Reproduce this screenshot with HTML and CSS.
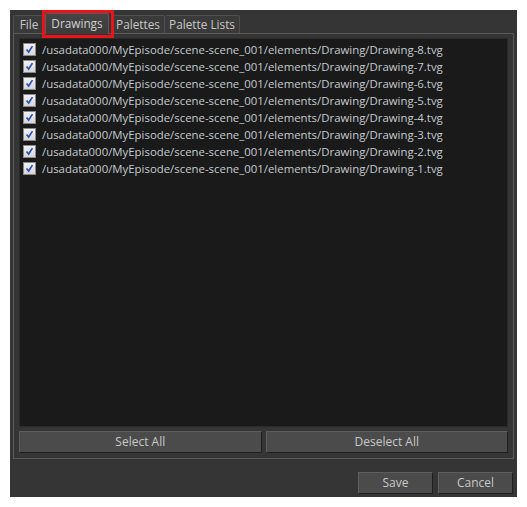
FILE: index.html
```html
<!DOCTYPE html>
<html>
<head>
<meta charset="utf-8">
<link rel="stylesheet" href="styles.css">
</head>
<body>
<div class="dialog">
  <div class="tabbar">
    <div class="tab tab-file">File</div>
    <div class="tab tab-active">Drawings<span class="highlight"></span></div>
    <div class="tab tab-pal">Palettes</div>
    <div class="tab tab-lists">Palette Lists</div>
  </div>
  <div class="frame">
    <div class="list">
      <div class="row"><span class="check"><svg viewBox="0 0 13 13" width="13" height="13"><path d="M3 6.5 L5.5 9.5 L10 2.5" fill="none" stroke="#2a52be" stroke-width="2"/></svg></span><span class="path">/usadata000/MyEpisode/scene-scene_001/elements/Drawing/Drawing-8.tvg</span></div>
      <div class="row"><span class="check"><svg viewBox="0 0 13 13" width="13" height="13"><path d="M3 6.5 L5.5 9.5 L10 2.5" fill="none" stroke="#2a52be" stroke-width="2"/></svg></span><span class="path">/usadata000/MyEpisode/scene-scene_001/elements/Drawing/Drawing-7.tvg</span></div>
      <div class="row"><span class="check"><svg viewBox="0 0 13 13" width="13" height="13"><path d="M3 6.5 L5.5 9.5 L10 2.5" fill="none" stroke="#2a52be" stroke-width="2"/></svg></span><span class="path">/usadata000/MyEpisode/scene-scene_001/elements/Drawing/Drawing-6.tvg</span></div>
      <div class="row"><span class="check"><svg viewBox="0 0 13 13" width="13" height="13"><path d="M3 6.5 L5.5 9.5 L10 2.5" fill="none" stroke="#2a52be" stroke-width="2"/></svg></span><span class="path">/usadata000/MyEpisode/scene-scene_001/elements/Drawing/Drawing-5.tvg</span></div>
      <div class="row"><span class="check"><svg viewBox="0 0 13 13" width="13" height="13"><path d="M3 6.5 L5.5 9.5 L10 2.5" fill="none" stroke="#2a52be" stroke-width="2"/></svg></span><span class="path">/usadata000/MyEpisode/scene-scene_001/elements/Drawing/Drawing-4.tvg</span></div>
      <div class="row"><span class="check"><svg viewBox="0 0 13 13" width="13" height="13"><path d="M3 6.5 L5.5 9.5 L10 2.5" fill="none" stroke="#2a52be" stroke-width="2"/></svg></span><span class="path">/usadata000/MyEpisode/scene-scene_001/elements/Drawing/Drawing-3.tvg</span></div>
      <div class="row"><span class="check"><svg viewBox="0 0 13 13" width="13" height="13"><path d="M3 6.5 L5.5 9.5 L10 2.5" fill="none" stroke="#2a52be" stroke-width="2"/></svg></span><span class="path">/usadata000/MyEpisode/scene-scene_001/elements/Drawing/Drawing-2.tvg</span></div>
      <div class="row"><span class="check"><svg viewBox="0 0 13 13" width="13" height="13"><path d="M3 6.5 L5.5 9.5 L10 2.5" fill="none" stroke="#2a52be" stroke-width="2"/></svg></span><span class="path">/usadata000/MyEpisode/scene-scene_001/elements/Drawing/Drawing-1.tvg</span></div>
    </div>
    <div class="selbtns">
      <div class="btn">Select All</div>
      <div class="btn">Deselect All</div>
    </div>
  </div>
  <div class="footer">
    <div class="btn btn-small">Save</div>
    <div class="btn btn-small">Cancel</div>
  </div>
</div>
</body>
</html>
```
FILE: styles.css
```css
html, body {
  margin: 0;
  padding: 0;
  background: #ffffff;
}
body {
  font-family: "Open Sans", "DejaVu Sans", sans-serif;
  font-size: 12px;
  color: #c8c8c8;
}
.dialog {
  margin: 10px 0 0 10px;
  width: 507px;
  height: 487px;
  background: #353535;
  box-sizing: border-box;
  padding: 3px 3px 3px 3px;
  display: flex;
  flex-direction: column;
}
.tabbar {
  display: flex;
  align-items: flex-end;
  height: 20px;
  position: relative;
  z-index: 1;
}
.tab {
  box-sizing: border-box;
  height: 18px;
  border: 1px solid #4f4f4f;
  border-bottom: none;
  background: #3a3a3a;
  text-align: center;
  line-height: 17px;
  font-size: 11.8px;
  border-radius: 2px 2px 0 0;
}
.tab-file { width: 32px; }
.tab-active {
  position: relative;
  width: 64px;
  height: 21px;
  line-height: 19px;
  background: linear-gradient(#454545, #3b3b3b);
  border-color: #5a5a5a;
  margin-bottom: -1px;
  color: #d0d0d0;
}
.tab-pal { width: 54px; margin-left: 2px; }
.tab-lists { width: 75px; border-left: none; }
.highlight {
  position: absolute;
  left: -4px;
  top: -4px;
  width: 72px;
  height: 28px;
  box-sizing: border-box;
  border: 3px solid #e8141a;
  pointer-events: none;
}
.frame {
  border: 1px solid #5a5a5a;
  padding: 4px 5px 5px 5px;
  height: 426px;
  box-sizing: border-box;
  display: flex;
  flex-direction: column;
  gap: 4px;
}
.list {
  flex: 1;
  background: #1a1a1a;
  border: 1px solid #2a2a2a;
  padding: 2px 0 0 3px;
}
.row {
  display: flex;
  align-items: center;
  height: 17px;
  gap: 6px;
}
.check {
  width: 13px;
  height: 13px;
  box-sizing: border-box;
  background: linear-gradient(#f2f2f2, #d6d6d6);
  border: 1px solid #8a8a8a;
  display: flex;
  align-items: center;
  justify-content: center;
}
.check svg {
  width: 11px;
  height: 11px;
}
.path {
  white-space: nowrap;
  color: #c4cad0;
  font-size: 11.4px;
}
.selbtns {
  display: flex;
  gap: 4px;
  height: 22px;
}
.btn {
  box-sizing: border-box;
  background: #4b4b4b;
  border: 1px solid #5e5e5e;
  border-right-color: #1f1f1f;
  border-bottom-color: #1f1f1f;
  text-align: center;
  line-height: 20px;
  font-size: 12px;
  color: #c8c8c8;
}
.selbtns .btn { flex: 1; }
.footer {
  display: flex;
  justify-content: flex-end;
  gap: 5px;
  padding: 13px 1px 0 0;
}
.btn-small {
  width: 75px;
  height: 22px;
}
```
